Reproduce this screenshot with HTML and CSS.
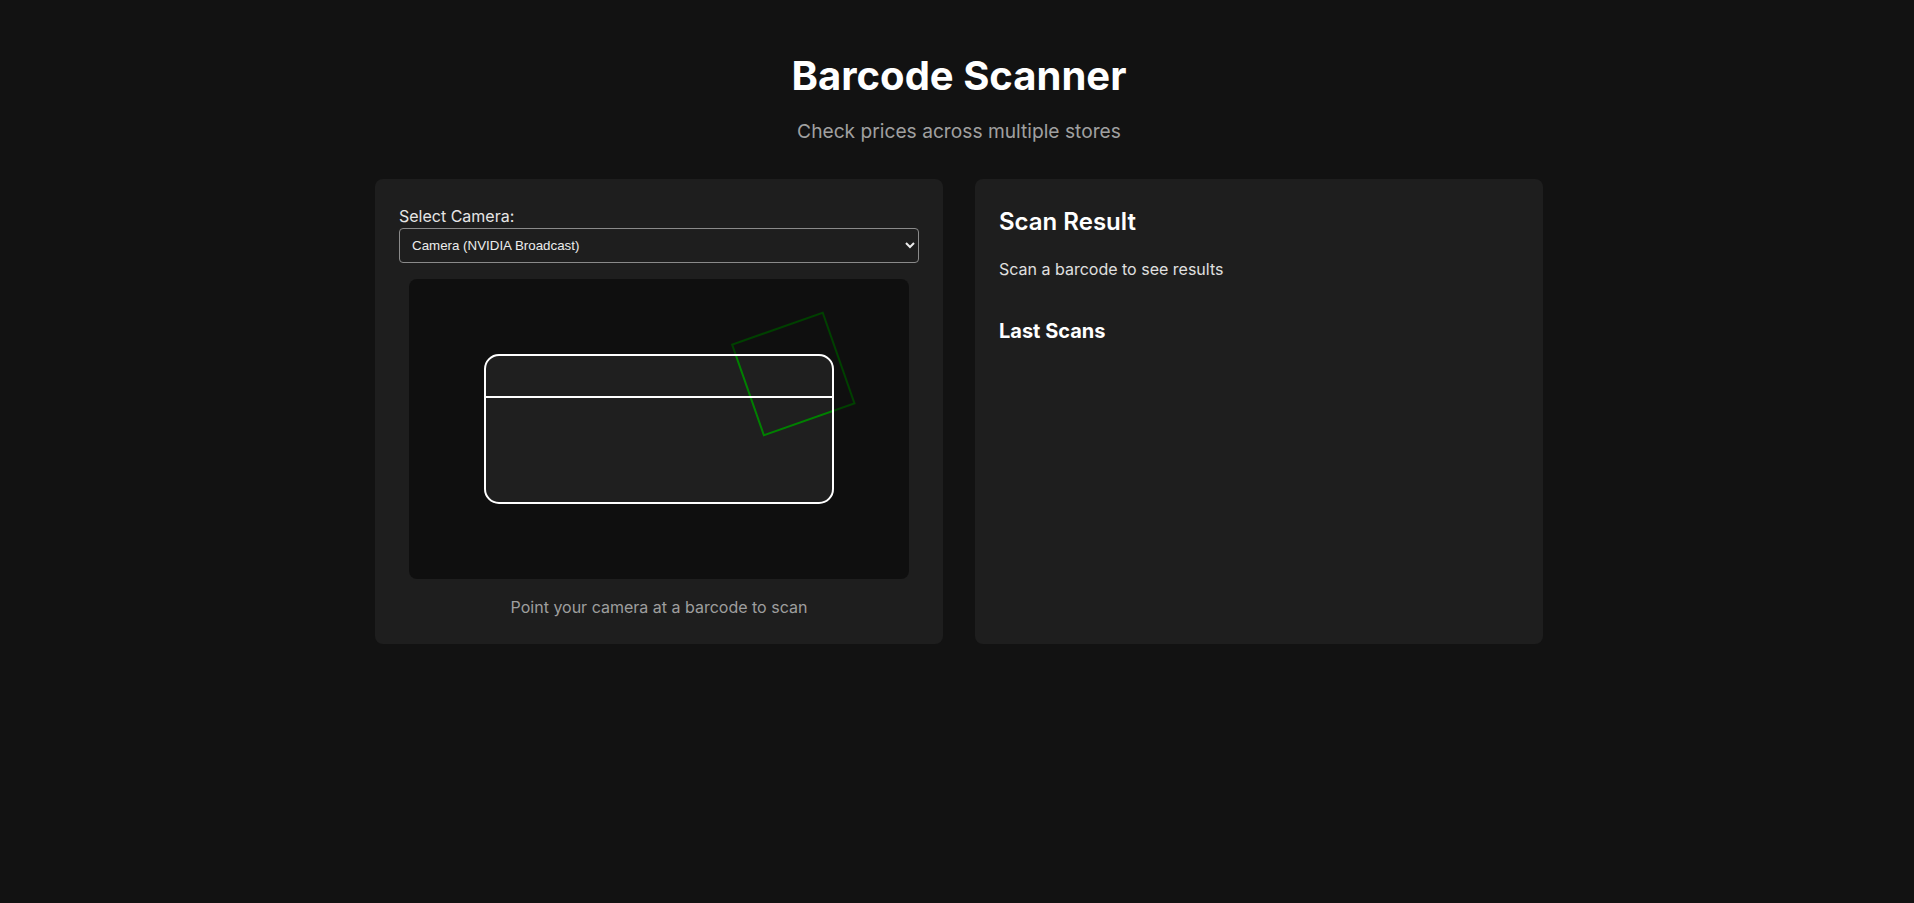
FILE: index.html
```html
<!DOCTYPE html>
<html lang="en">
<head>
<meta charset="utf-8">
<title>Barcode Scanner</title>
<link rel="stylesheet" href="styles.css">
</head>
<body>
<div class="page">
  <header class="header">
    <h1 class="title">Barcode Scanner</h1>
    <p class="subtitle">Check prices across multiple stores</p>
  </header>
  <main class="grid">
    <section class="card">
      <label class="label" for="camera">Select Camera:</label>
      <select id="camera" class="select">
        <option>Camera (NVIDIA Broadcast)</option>
      </select>
      <div class="video">
        <svg class="detect" width="500" height="300" viewBox="0 0 500 300">
          <rect x="336.3" y="47" width="96" height="96" fill="none" stroke="#008000" stroke-width="2" transform="rotate(-19.3 384.3 95)"/>
        </svg>
        <div class="scanbox"><div class="scanline"></div></div>
      </div>
      <p class="hint">Point your camera at a barcode to scan</p>
    </section>
    <section class="card">
      <h2 class="result-title">Scan Result</h2>
      <p class="result-text">Scan a barcode to see results</p>
      <h3 class="last-title">Last Scans</h3>
    </section>
  </main>
</div>
</body>
</html>
```
FILE: styles.css
```css
* { box-sizing: border-box; }
html, body { margin: 0; padding: 0; }
body {
  background: #121212;
  color: #e0e0e0;
  font-family: Inter, "Noto Sans", sans-serif;
  font-size: 16px;
  line-height: 1.5;
}
.page {
  padding: 52px 0 40px 4px;
}
.header { text-align: center; }
.title {
  margin: 0 0 17px;
  font-size: 40px;
  line-height: 48px;
  font-weight: 700;
  color: #ffffff;
}
.subtitle {
  margin: 0 0 33px;
  font-size: 19.2px;
  line-height: 28.8px;
  color: #a0a0a0;
}
.grid {
  max-width: 1168px;
  margin: 0 auto;
  display: grid;
  grid-template-columns: 1fr 1fr;
  gap: 32px;
  align-items: stretch;
}
.card {
  background: #1e1e1e;
  border-radius: 8px;
  padding: 25px 24px;
  display: flex;
  flex-direction: column;
}
.label {
  display: block;
  color: #e6e6e6;
  line-height: 24px;
}
.select {
  width: 100%;
  height: 35px;
  margin: 0 0 16px;
  padding: 0 8px;
  background: #1e1e1e;
  color: #ececec;
  border: 1px solid #8a8a8a;
  border-radius: 4px;
  font-family: "Liberation Sans", Arial, sans-serif;
  font-size: 13.33px;
  color-scheme: dark;
}
.video {
  position: relative;
  width: 500px;
  height: 300px;
  margin: 0 auto;
  background: #1f1f1f;
  border-radius: 8px;
  overflow: hidden;
  display: flex;
  align-items: center;
  justify-content: center;
}
.detect {
  position: absolute;
  left: 0;
  top: 0;
}
.scanbox {
  position: relative;
  width: 350px;
  height: 150px;
  border: 2px solid #ffffff;
  border-radius: 15px;
  box-shadow: 0 0 0 9999px rgba(0, 0, 0, 0.5);
}
.scanline {
  position: absolute;
  left: 0;
  right: 0;
  top: 40px;
  height: 2px;
  background: #ffffff;
}
.hint {
  margin: 16px 0 0;
  text-align: center;
  color: #9e9e9e;
}
.result-title {
  margin: 0 0 17px;
  font-size: 24px;
  line-height: 36px;
  font-weight: 600;
  color: #ffffff;
}
.result-text {
  margin: 0;
  color: #e0e0e0;
}
.last-title {
  margin: 35px 0 0;
  font-size: 20px;
  line-height: 30px;
  font-weight: 700;
  color: #ffffff;
}
```
